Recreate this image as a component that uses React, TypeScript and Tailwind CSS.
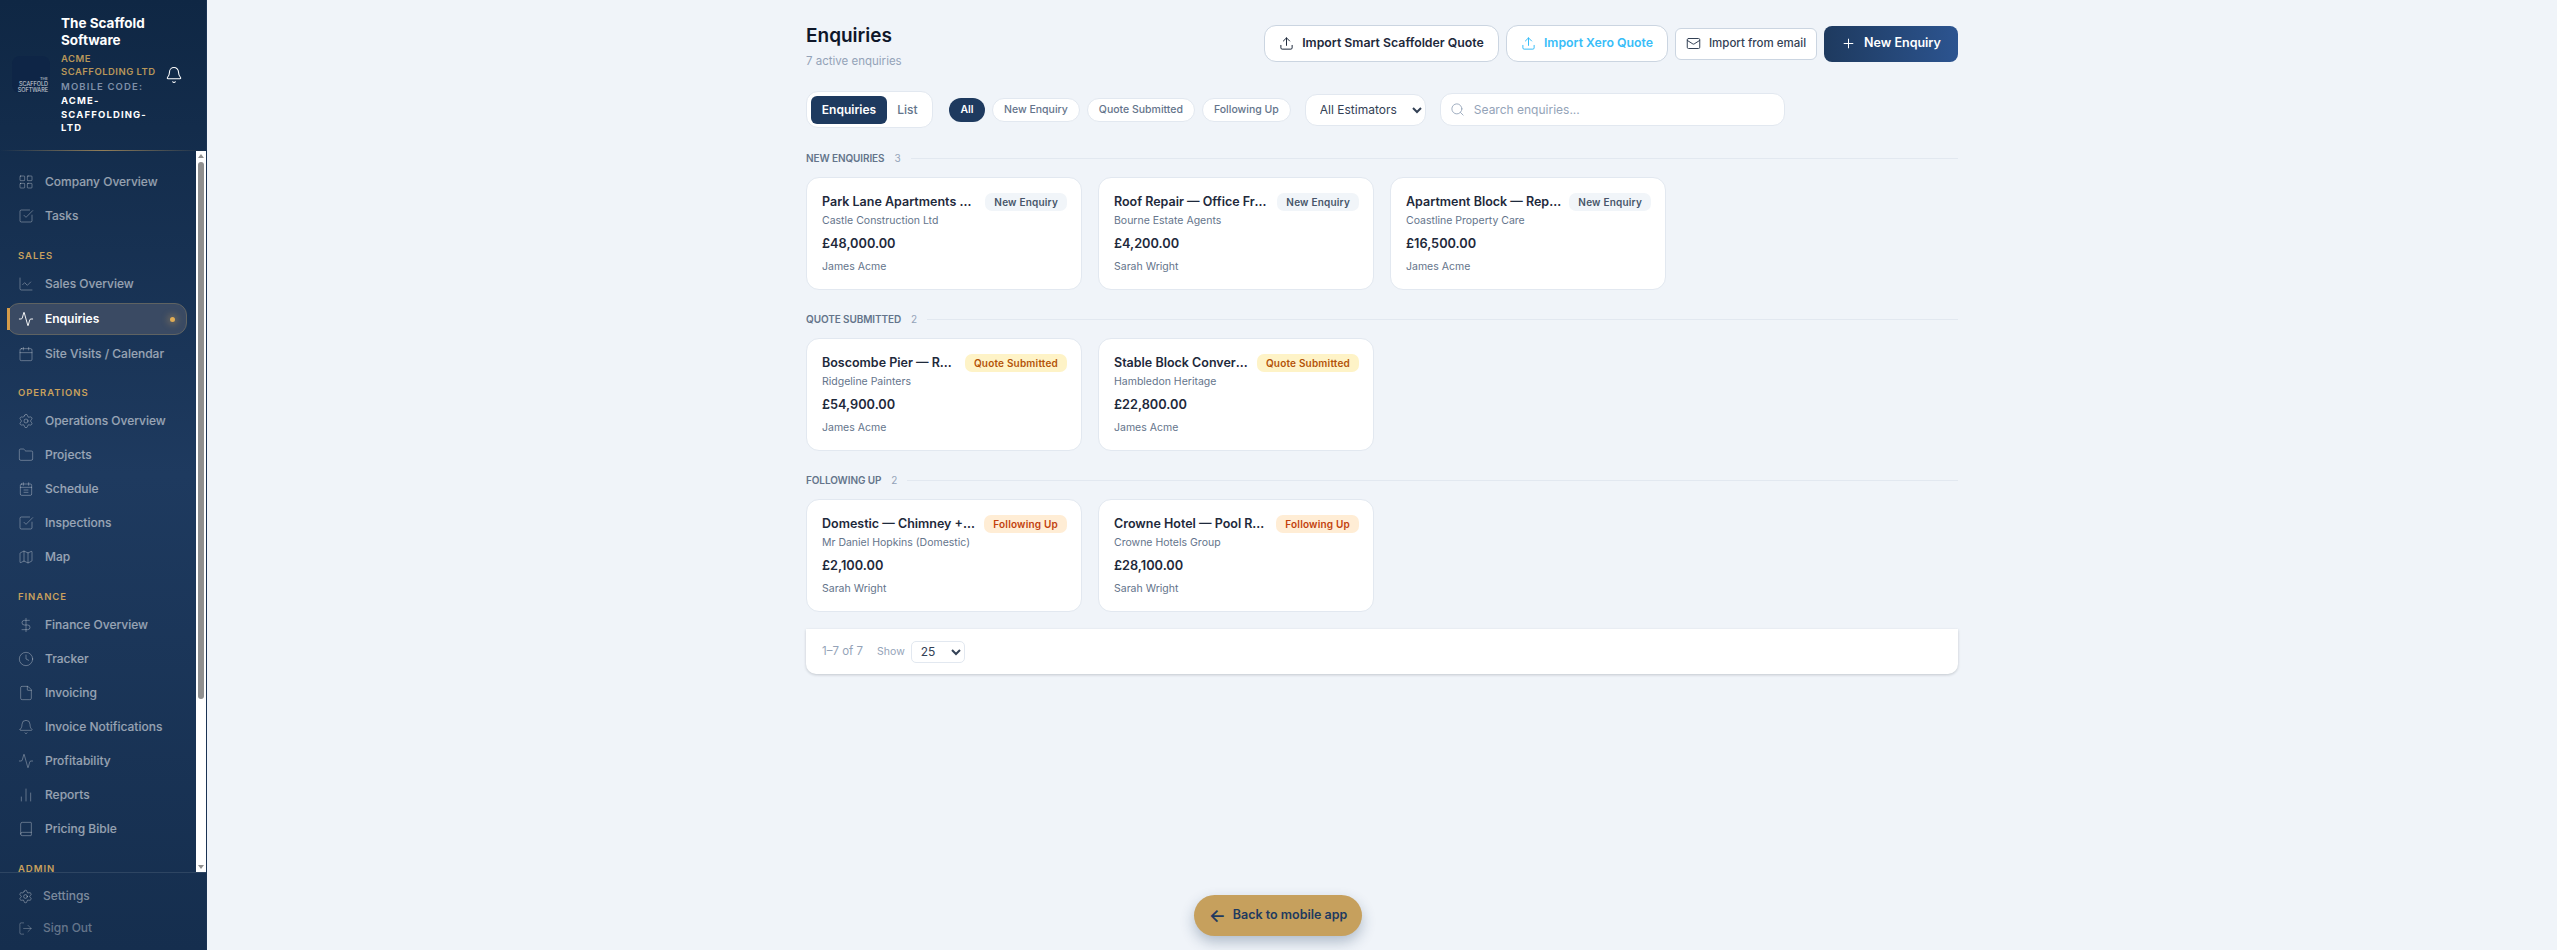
import { Activity, Bell, Book, Calendar, ChartLine, ChartNoAxesColumn, Clock, DollarSign, File as FileIcon, Folder, LayoutGrid, LogOut, Mail, Map as MapIcon, Plus, Search, Settings, SquareCheckBig, Upload } from "lucide-react";
import type { ComponentType } from "react";

type IconT = ComponentType<{ size?: number; strokeWidth?: number; className?: string }>;

function ScheduleIcon({ size = 16, strokeWidth = 1.3, className }: { size?: number; strokeWidth?: number; className?: string }) {
  return (
    <svg width={size} height={size} viewBox="0 0 24 24" fill="none" stroke="currentColor" strokeWidth={strokeWidth} strokeLinecap="round" strokeLinejoin="round" className={className}>
      <rect x="3.5" y="4.5" width="17" height="17" rx="2" />
      <path d="M8 2.5v4M16 2.5v4M3.5 9.5h17M9 13.5h6M9 17h6" />
    </svg>
  );
}

function NavItem({ icon: Icon, label, active }: { icon: IconT; label: string; active?: boolean }) {
  if (active) {
    return (
      <div className="relative ml-[7px] mr-[9px] my-[2px] h-[32px] flex items-center pl-[10px] rounded-[12px] bg-[#3a4a63] border border-[#5f6362] text-white">
        <span className="absolute left-[-1px] top-[4px] w-[3px] h-[22px] bg-[#d49b4a]" />
        <Icon size={16} strokeWidth={1.4} className="shrink-0 text-white" />
        <span className="ml-[11px] text-[12px] font-semibold">{label}</span>
        <span className="absolute right-[11px] top-[13px] w-[5px] h-[5px] rounded-full bg-[#e0ac55] shadow-[0_0_6px_3px_rgba(224,172,85,0.25)]" />
      </div>
    );
  }
  return (
    <div className="h-[34px] flex items-center pl-[18px] text-white/55">
      <Icon size={16} strokeWidth={1.2} className="shrink-0 text-white/40" />
      <span className="ml-[11px] text-[12px] font-medium">{label}</span>
    </div>
  );
}

function NavHeading({ label }: { label: string }) {
  return (
    <div className="mt-[16.7px] mb-[5px] h-[12px] pl-[18px] flex items-center text-[9.5px] leading-[12px] font-semibold tracking-[0.1em] uppercase text-[#c9a15d]">
      {label}
    </div>
  );
}

function Sidebar() {
  return (
    <aside className="w-[207px] shrink-0 h-full flex flex-col bg-gradient-to-b from-[#0f2744] via-[#1e3a5f] to-[#152e4e] border-r border-[#1a3354]">
      <div className="h-[150px] shrink-0 flex items-center pl-[12px]">
        <div className="relative w-[38px] h-[37px] mt-[-1px] rounded-[8px] bg-[#0e2546] shrink-0 flex flex-col items-end text-[5.5px] leading-[6px] text-white/80 pt-[20px] pr-[2px] whitespace-nowrap">
          <span className="text-[4px] leading-[5px]">THE</span>
          <span>SCAFFOLD</span>
          <span>SOFTWARE</span>
        </div>
        <div className="ml-[11px] w-[106px] shrink-0">
          <div className="w-[96px] text-[13.5px] leading-[17px] font-bold text-white">The Scaffold Software</div>
          <div className="mt-[3px] text-[9.5px] leading-[13px] font-semibold tracking-[0.05em] uppercase text-[#b8975a]">ACME<br />SCAFFOLDING LTD</div>
          <div className="mt-[2px] text-[9.5px] leading-[14px] font-semibold tracking-[0.12em] uppercase text-[#7f90a8]">Mobile code:</div>
          <div className="text-[9.5px] leading-[13.5px] font-bold tracking-[0.12em] uppercase text-white">ACME-<br />SCAFFOLDING-<br />LTD</div>
        </div>
        <Bell size={18} strokeWidth={1.4} className="ml-[-2px] text-white shrink-0" />
      </div>
      <div className="h-[1px] shrink-0 bg-gradient-to-r from-transparent via-[#c9a15d] to-transparent opacity-70" />
      <div className="flex-1 min-h-0 flex">
        <nav className="flex-1 overflow-hidden pt-[14px]">
          <NavItem icon={LayoutGrid} label="Company Overview" />
          <NavItem icon={SquareCheckBig} label="Tasks" />
          <NavHeading label="Sales" />
          <NavItem icon={ChartLine} label="Sales Overview" />
          <NavItem icon={Activity} label="Enquiries" active />
          <NavItem icon={Calendar} label="Site Visits / Calendar" />
          <NavHeading label="Operations" />
          <NavItem icon={Settings} label="Operations Overview" />
          <NavItem icon={Folder} label="Projects" />
          <NavItem icon={ScheduleIcon} label="Schedule" />
          <NavItem icon={SquareCheckBig} label="Inspections" />
          <NavItem icon={MapIcon} label="Map" />
          <NavHeading label="Finance" />
          <NavItem icon={DollarSign} label="Finance Overview" />
          <NavItem icon={Clock} label="Tracker" />
          <NavItem icon={FileIcon} label="Invoicing" />
          <NavItem icon={Bell} label="Invoice Notifications" />
          <NavItem icon={Activity} label="Profitability" />
          <NavItem icon={ChartNoAxesColumn} label="Reports" />
          <NavItem icon={Book} label="Pricing Bible" />
          <NavHeading label="Admin" />
          <NavItem icon={Settings} label="Settings" />
        </nav>
        <div className="w-[10px] shrink-0 bg-white flex flex-col items-center">
          <div className="mt-[3px] h-0 w-0 border-x-[3px] border-x-transparent border-b-[4px] border-b-[#8f8f8f]" />
          <div className="mt-[4px] w-[6px] h-[537px] rounded-[3px] bg-[#8f8f8f]" />
          <div className="mt-auto mb-[3px] h-0 w-0 border-x-[3px] border-x-transparent border-t-[4px] border-t-[#8f8f8f]" />
        </div>
      </div>
      <div className="h-[78px] shrink-0 border-t border-white/10 pt-[7px]">
        <div className="h-[32px] flex items-center pl-[18px] text-white/45">
          <Settings size={15} strokeWidth={1.2} className="shrink-0" />
          <span className="ml-[10px] text-[12px] font-medium">Settings</span>
        </div>
        <div className="h-[32px] flex items-center pl-[18px] text-white/35">
          <LogOut size={15} strokeWidth={1.2} className="shrink-0" />
          <span className="ml-[10px] text-[12px] font-medium">Sign Out</span>
        </div>
      </div>
    </aside>
  );
}

function EnquiryCard({ title, client, amount, person, badge, badgeClass }: { title: string; client: string; amount: string; person: string; badge: string; badgeClass: string }) {
  return (
    <div className="h-[113px] bg-white rounded-[13px] border border-[#e2e8f0] pt-[15px] pl-[15px] pr-[14px]">
      <div className="flex items-center justify-between gap-[8px] h-[18px]">
        <span className="min-w-0 truncate text-[12.5px] font-semibold text-[#1e293b]">{title}</span>
        <span className={"shrink-0 h-[18px] flex items-center px-[9px] rounded-[7px] text-[10px] font-semibold tracking-[0.02em] whitespace-nowrap " + badgeClass}>{badge}</span>
      </div>
      <div className="mt-[2px] text-[10.5px] leading-[16px] text-[#64748b]">{client}</div>
      <div className="mt-[7px] text-[12.75px] leading-[16px] font-semibold text-[#1e293b]">{amount}</div>
      <div className="mt-[7px] text-[10.5px] leading-[16px] text-[#64748b]">{person}</div>
    </div>
  );
}

const NEW_B = "bg-[#f1f5f9] text-[#475569]";
const QUOTE_B = "bg-[#fef3c7] text-[#b45309]";
const FOLLOW_B = "bg-[#ffedd5] text-[#c2410c]";

function Section({ label, count, children }: { label: string; count: number; children: React.ReactNode }) {
  return (
    <section className="mb-[23px]">
      <div className="flex items-center h-[12px]">
        <span className="text-[10px] font-semibold uppercase tracking-[-0.01em] text-[#64748b]">{label}</span>
        <span className="ml-[10px] text-[10px] text-[#94a3b8]">{count}</span>
        <div className="ml-[10px] flex-1 h-[1px] bg-[#e2e8f0]" />
      </div>
      <div className="mt-[13px] grid grid-cols-4 gap-[16px]">{children}</div>
    </section>
  );
}

function Pill({ label, active }: { label: string; active?: boolean }) {
  return (
    <span className={active ? "h-[24px] w-[36px] flex items-center justify-center rounded-full bg-[#1e3a5f] text-white text-[10.5px] font-semibold" : "h-[24px] flex items-center px-[11px] rounded-full bg-white border border-[#e2e8f0] text-[#64748b] text-[10.5px] font-medium whitespace-nowrap"}>
      {label}
    </span>
  );
}

export default function App() {
  return (
    <div className="relative flex h-screen w-full overflow-hidden bg-[#f0f4f9] font-['Inter',sans-serif]">
      <Sidebar />
      <main className="flex-1 min-w-0 overflow-hidden">
        <div className="w-[1152px] mx-auto">
          <header className="flex items-start justify-between pt-[23px] h-[91px]">
            <div>
              <h1 className="text-[19px] leading-[26px] font-semibold text-[#0f172a]">Enquiries</h1>
              <p className="mt-[4px] text-[11.5px] leading-[16px] text-[#94a3b8]">7 active enquiries</p>
            </div>
            <div className="flex items-center gap-[7px] pt-[2px]">
              <button className="h-[37px] w-[235px] flex items-center justify-center gap-[8px] rounded-[12px] bg-white border border-[#cbd5e1] text-[12.3px] font-semibold text-[#1e293b]">
                <Upload size={15} strokeWidth={1.6} />Import Smart Scaffolder Quote
              </button>
              <button className="h-[37px] w-[162px] flex items-center justify-center gap-[8px] rounded-[12px] bg-white border border-[#cbd5e1] text-[12.3px] font-semibold text-[#38bdf8]">
                <Upload size={15} strokeWidth={1.6} />Import Xero Quote
              </button>
              <button className="h-[32px] w-[142px] flex items-center justify-center gap-[8px] rounded-[6px] bg-white border border-[#cbd5e1] text-[11.5px] font-medium text-[#334155]">
                <Mail size={15} strokeWidth={1.6} />Import from email
              </button>
              <button className="h-[36px] w-[134px] flex items-center justify-center gap-[8px] rounded-[8px] bg-gradient-to-r from-[#1e3a5f] to-[#2c5490] text-[12.5px] font-semibold text-white">
                <Plus size={15} strokeWidth={1.6} />New Enquiry
              </button>
            </div>
          </header>
          <div className="flex items-center h-[37px] mb-[24px]">
            <div className="w-[127px] h-[37px] flex items-center p-[4px] rounded-[12px] bg-white border border-[#e2e8f0]">
              <span className="w-[76px] h-[28px] flex items-center justify-center rounded-[6px] bg-[#1e3a5f] text-white text-[12px] font-semibold">Enquiries</span>
              <span className="flex-1 text-center text-[12px] font-medium text-[#64748b]">List</span>
            </div>
            <div className="ml-[16px] flex items-center gap-[7px]">
              <Pill label="All" active />
              <Pill label="New Enquiry" />
              <Pill label="Quote Submitted" />
              <Pill label="Following Up" />
            </div>
            <select className="ml-[14px] w-[121px] h-[32px] pl-[10px] rounded-[12px] bg-white border border-[#e2e8f0] text-[12px] text-[#334155]">
              <option>All Estimators</option>
            </select>
            <div className="ml-[14px] w-[345px] h-[33px] flex items-center pl-[9px] rounded-[12px] bg-white border border-[#e2e8f0]">
              <Search size={15} strokeWidth={1.4} className="text-[#94a3b8]" />
              <span className="ml-[9px] text-[12px] text-[#94a3b8]">Search enquiries...</span>
            </div>
          </div>
          <Section label="New Enquiries" count={3}>
            <EnquiryCard title="Park Lane Apartments — Full Scaffold" client="Castle Construction Ltd" amount="£48,000.00" person="James Acme" badge="New Enquiry" badgeClass={NEW_B} />
            <EnquiryCard title="Roof Repair — Office Frontage" client="Bourne Estate Agents" amount="£4,200.00" person="Sarah Wright" badge="New Enquiry" badgeClass={NEW_B} />
            <EnquiryCard title="Apartment Block — Repointing" client="Coastline Property Care" amount="£16,500.00" person="James Acme" badge="New Enquiry" badgeClass={NEW_B} />
          </Section>
          <Section label="Quote Submitted" count={2}>
            <EnquiryCard title="Boscombe Pier — Repainting" client="Ridgeline Painters" amount="£54,900.00" person="James Acme" badge="Quote Submitted" badgeClass={QUOTE_B} />
            <EnquiryCard title="Stable Block Conversion Works" client="Hambledon Heritage" amount="£22,800.00" person="James Acme" badge="Quote Submitted" badgeClass={QUOTE_B} />
          </Section>
          <Section label="Following Up" count={2}>
            <EnquiryCard title="Domestic — Chimney + Roof Access" client="Mr Daniel Hopkins (Domestic)" amount="£2,100.00" person="Sarah Wright" badge="Following Up" badgeClass={FOLLOW_B} />
            <EnquiryCard title="Crowne Hotel — Pool Roof Works" client="Crowne Hotels Group" amount="£28,100.00" person="Sarah Wright" badge="Following Up" badgeClass={FOLLOW_B} />
          </Section>
          <div className="mt-[-6px] h-[45px] flex items-center pl-[16px] bg-white rounded-b-[10px] shadow-[0_1px_3px_rgba(15,23,42,0.2)]">
            <span className="text-[11.5px] text-[#94a3b8]">1–7 of 7</span>
            <span className="ml-[14px] text-[10.5px] text-[#94a3b8]">Show</span>
            <select className="ml-[6px] w-[54px] h-[22px] pl-[5px] rounded-[5px] bg-white border border-[#e2e8f0] text-[12px] text-[#334155]">
              <option>25</option>
            </select>
          </div>
        </div>
      </main>
      <button className="absolute left-[1194px] top-[895px] w-[168px] h-[41px] flex items-center justify-center gap-[7px] rounded-full bg-[#c6a05d] text-[#1e3a5f] text-[12.5px] font-semibold shadow-[0_6px_14px_rgba(30,58,95,0.3)]">
        <span className="text-[18px] leading-none">←</span>Back to mobile app
      </button>
    </div>
  );
}
